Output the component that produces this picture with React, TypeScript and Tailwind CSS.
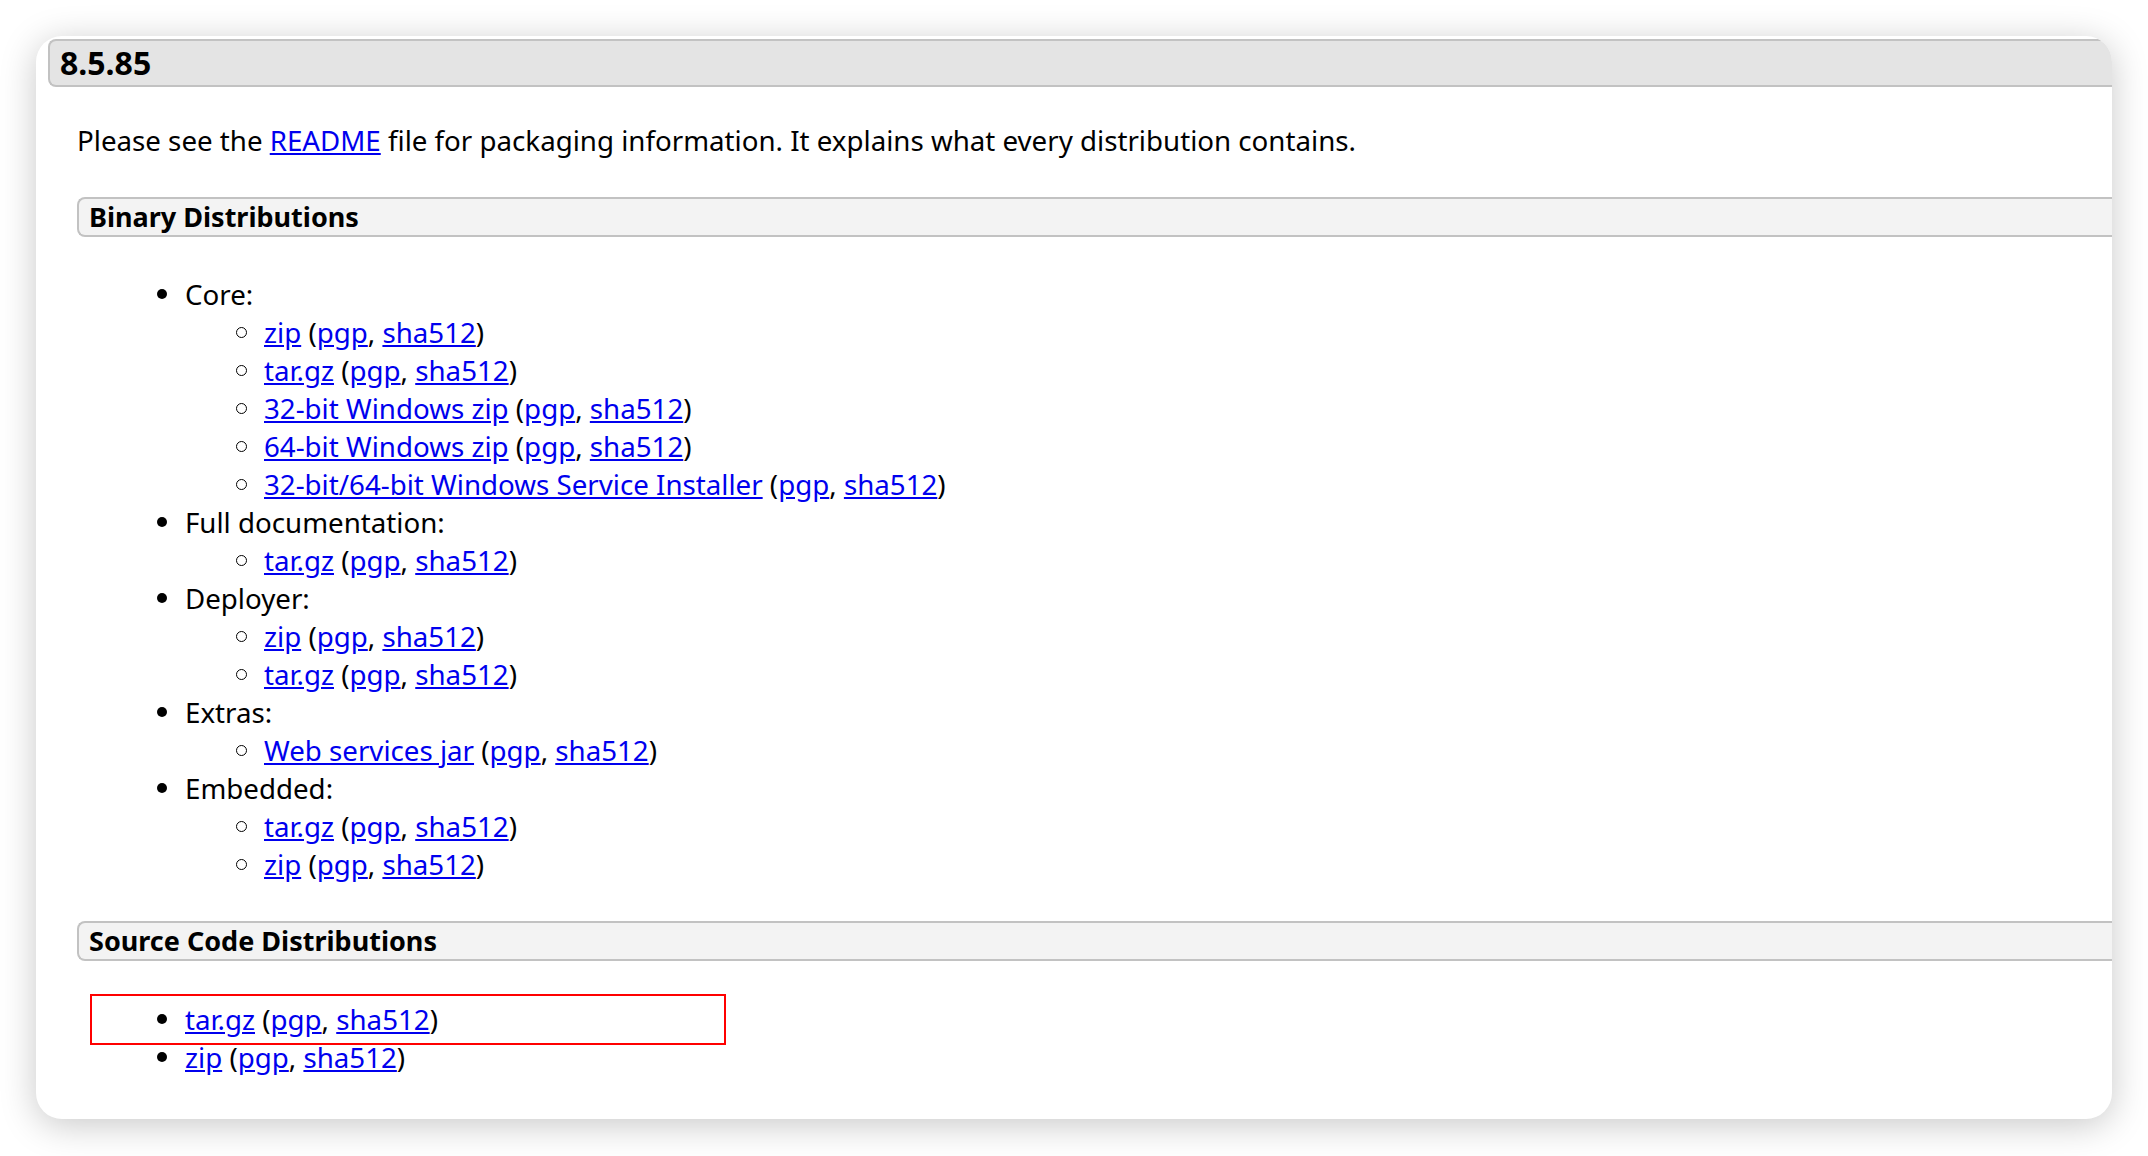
const font = "font-['Noto_Sans','Open_Sans',sans-serif]";

type Item = { label: string };

const binary: { title: string; items: string[] }[] = [
  {
    title: "Core:",
    items: [
      "zip",
      "tar.gz",
      "32-bit Windows zip",
      "64-bit Windows zip",
      "32-bit/64-bit Windows Service Installer",
    ],
  },
  { title: "Full documentation:", items: ["tar.gz"] },
  { title: "Deployer:", items: ["zip", "tar.gz"] },
  { title: "Extras:", items: ["Web services jar"] },
  { title: "Embedded:", items: ["tar.gz", "zip"] },
];

function A({ children }: { children: React.ReactNode }) {
  return (
    <a href="#" className="text-[#0000ee] underline">
      {children}
    </a>
  );
}

function Download({ label }: Item) {
  return (
    <span>
      <A>{label}</A> (<A>pgp</A>, <A>sha512</A>)
    </span>
  );
}

function Disc() {
  return (
    <span className="flex w-[28px] shrink-0 items-center">
      <span className="h-[10px] w-[10px] rounded-full bg-black" />
    </span>
  );
}

function Circle() {
  return (
    <span className="flex w-[28px] shrink-0 items-center">
      <span className="h-[11px] w-[11px] rounded-full border-[1.5px] border-black" />
    </span>
  );
}

function SectionHeader({ children }: { children: React.ReactNode }) {
  return (
    <div className="mr-[-40px] h-[40px] rounded-l-[8px] border-2 border-r-0 border-[#c2c2c2] bg-[#f3f3f3] pl-[10px] text-[27px] font-bold leading-[36px]">
      {children}
    </div>
  );
}

export default function App() {
  return (
    <div className={`h-[1156px] w-full bg-white p-[36px] text-black ${font}`}>
      <div className="h-[1083px] overflow-hidden rounded-[26px] bg-white pl-[12px] pt-[3px] shadow-[0_6px_36px_rgba(0,0,0,0.22)]">
        <div className="mr-[-40px] h-[48px] rounded-l-[8px] border-2 border-r-0 border-[#c2c2c2] bg-[#e4e4e4] pl-[10px] text-[32px] font-bold leading-[44px]">
          8.5.85
        </div>

        <div className="ml-[29px] text-[27.7px] leading-[38px]">
          <p className="mt-[34px]">
            Please see the <A>README</A> file for packaging information. It explains what every distribution contains.
          </p>

          <div className="mt-[38px]">
            <SectionHeader>Binary Distributions</SectionHeader>
          </div>

          <ul className="mt-[38px] pl-[80px]">
            {binary.map((group) => (
              <li key={group.title}>
                <div className="flex h-[38px] items-center">
                  <Disc />
                  <span>{group.title}</span>
                </div>
                <ul className="pl-[79px]">
                  {group.items.map((item, i) => (
                    <li key={i} className="flex h-[38px] items-center">
                      <Circle />
                      <Download label={item} />
                    </li>
                  ))}
                </ul>
              </li>
            ))}
          </ul>

          <div className="mt-[38px]">
            <SectionHeader>Source Code Distributions</SectionHeader>
          </div>

          <div className="relative mt-[39px]">
            <ul className="pl-[80px]">
              {["tar.gz", "zip"].map((item) => (
                <li key={item} className="flex h-[38px] items-center">
                  <Disc />
                  <Download label={item} />
                </li>
              ))}
            </ul>
            <div className="absolute left-[13px] top-[-6px] h-[51px] w-[636px] border-2 border-[#ff0000]" />
          </div>
        </div>
      </div>
    </div>
  );
}
